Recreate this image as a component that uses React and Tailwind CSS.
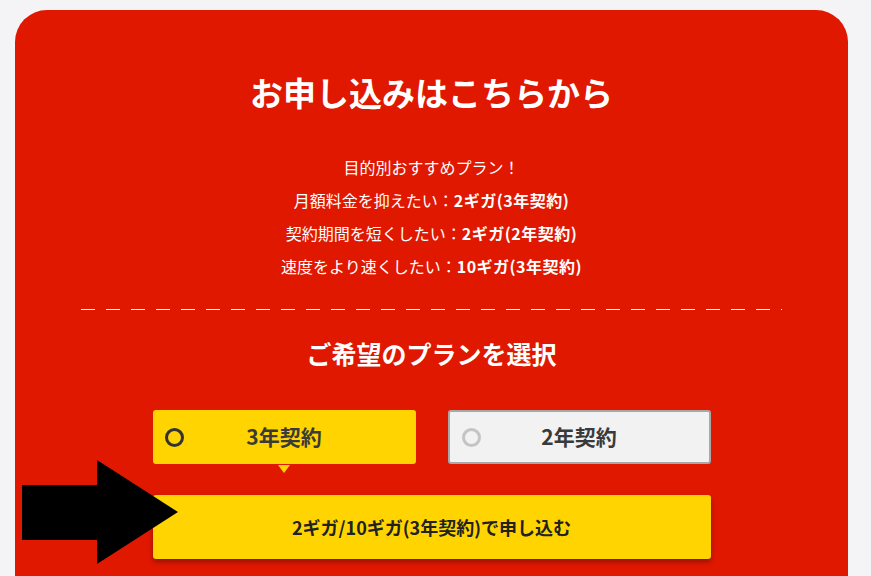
const FONT = { fontFamily: '"Noto Sans CJK JP", "Noto Sans", sans-serif' };

const PlanOption = ({ label, selected }) => (
  <div className="relative">
    <div
      className={`flex items-center h-[54px] w-[263px] rounded-[3px] px-[12px] ${
        selected
          ? "bg-[#ffd400]"
          : "bg-[#f2f2f2] border-2 border-[#a8a8a8]"
      }`}
    >
      <span
        className={`w-[19px] h-[19px] rounded-full border-[3px] ${
          selected ? "border-[#333]" : "border-[#c4c4c4]"
        }`}
      />
      <span className="flex-1 text-center text-[21px] font-bold text-[#3a3a3a] pr-[19px]">
        {label}
      </span>
    </div>
    {selected && (
      <span className="absolute left-1/2 -translate-x-1/2 top-[55px] w-0 h-0 border-l-[6px] border-r-[6px] border-t-[8px] border-l-transparent border-r-transparent border-t-[#ffd400]" />
    )}
  </div>
);

const App = () => {
  return (
    <div className="min-h-screen bg-[#f4f4f6] pt-[10px] pl-[15px]" style={FONT}>
      <div className="w-[833px] bg-[#e11800] rounded-t-[32px] pt-[62px] pb-[40px] text-white relative">
        {/* Title */}
        <h1 className="text-center text-[33px] font-bold leading-[40px]">
          お申し込みはこちらから
        </h1>

        {/* Recommended plans */}
        <div className="mt-[39px] text-center text-[16px] leading-[33px]">
          <p>目的別おすすめプラン！</p>
          <p>
            月額料金を抑えたい：<span className="font-bold tracking-[0.03em]">2ギガ(3年契約)</span>
          </p>
          <p>
            契約期間を短くしたい：<span className="font-bold tracking-[0.03em]">2ギガ(2年契約)</span>
          </p>
          <p>
            速度をより速くしたい：<span className="font-bold tracking-[0.03em]">10ギガ(3年契約)</span>
          </p>
        </div>

        {/* Divider */}
        <div className="mx-auto mt-[26px] w-[701px] h-px bg-[repeating-linear-gradient(to_right,#fff_0_14px,transparent_14px_25px)]" />

        {/* Plan select */}
        <h2 className="mt-[27px] text-center text-[25px] font-bold leading-[32px]">
          ご希望のプランを選択
        </h2>

        <div className="mt-[41px] flex justify-center gap-[32px]">
          <PlanOption label="3年契約" selected />
          <PlanOption label="2年契約" />
        </div>

        {/* Submit */}
        <div className="mt-[31px] flex justify-center">
          <button className="w-[558px] h-[64px] rounded-[3px] bg-[#ffd400] text-[#222] text-[18px] font-bold shadow-[0_3px_5px_rgba(0,0,0,0.35)]">
            2ギガ/10ギガ(3年契約)で申し込む
          </button>
        </div>

        {/* Pointer arrow */}
        <svg
          className="absolute left-[6px] top-[450px]"
          width="160"
          height="106"
          viewBox="0 0 160 106"
        >
          <polygon
            points="1,25 76,25 76,0 157,52 76,104 76,80 1,80"
            fill="#000"
          />
        </svg>
      </div>
    </div>
  );
};

export default App;
